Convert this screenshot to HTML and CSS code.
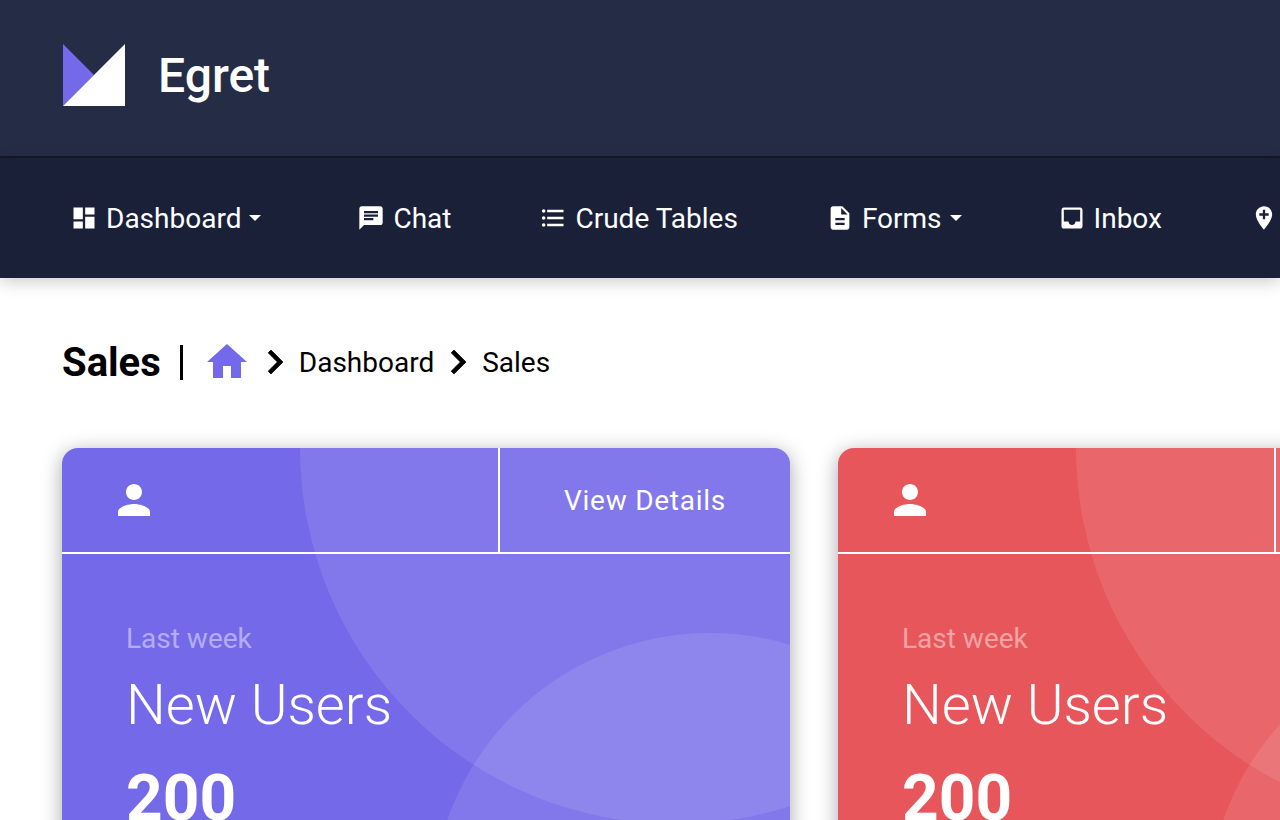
FILE: index.html
```html
<html>
<head>
<link rel="stylesheet" href="styles.css">
</head>
<body>

<div class="brand">
<svg class="logo" viewBox="0 0 62 62"><path fill="#7469e9" d="M0 0L31 31 0 62z"/><path fill="#fff" d="M62 0V62H0z"/></svg>
<span class="brand-name">Egret</span>
</div>

<div class="nav">
<a class="nav-item"><svg class="nav-icon" viewBox="0 0 24 24"><path d="M3 13h8V3H3v10zm0 8h8v-6H3v6zm10 0h8V11h-8v10zm0-18v6h8V3h-8z"/></svg>Dashboard<i class="caret"></i></a>
<a class="nav-item"><svg class="nav-icon" viewBox="0 0 24 24"><path d="M20 2H4c-1.1 0-1.99.9-1.99 2L2 22l4-4h14c1.1 0 2-.9 2-2V4c0-1.1-.9-2-2-2zM6 9h12v2H6V9zm8 5H6v-2h8v2zm4-6H6V6h12v2z"/></svg>Chat</a>
<a class="nav-item"><svg class="nav-icon" viewBox="0 0 24 24"><path d="M4 10.5c-.83 0-1.5.67-1.5 1.5s.67 1.5 1.5 1.5 1.5-.67 1.5-1.5-.67-1.5-1.5-1.5zm0-6c-.83 0-1.5.67-1.5 1.5S3.17 7.5 4 7.5 5.5 6.83 5.5 6 4.83 4.5 4 4.5zm0 12c-.83 0-1.5.68-1.5 1.5s.68 1.5 1.5 1.5 1.5-.68 1.5-1.5-.67-1.5-1.5-1.5zM7 19h14v-2H7v2zm0-6h14v-2H7v2zm0-8v2h14V5H7z"/></svg>Crude Tables</a>
<a class="nav-item"><svg class="nav-icon" viewBox="0 0 24 24"><path d="M14 2H6c-1.1 0-1.99.9-1.99 2L4 20c0 1.1.89 2 1.99 2H18c1.1 0 2-.9 2-2V8l-6-6zm2 16H8v-2h8v2zm0-4H8v-2h8v2zm-3-5V3.5L18.5 9H13z"/></svg>Forms<i class="caret"></i></a>
<a class="nav-item"><svg class="nav-icon" viewBox="0 0 24 24"><path d="M19 3H4.99c-1.11 0-1.98.89-1.98 2L3 19c0 1.1.88 2 1.99 2H19c1.1 0 2-.9 2-2V5c0-1.11-.9-2-2-2zm0 12h-4c0 1.66-1.35 3-3 3s-3-1.34-3-3H4.99V5H19v10z"/></svg>Inbox</a>
<a class="nav-item"><svg class="nav-icon" viewBox="0 0 24 24"><path d="M12 2C8.14 2 5 5.14 5 9c0 5.25 7 13 7 13s7-7.75 7-13c0-3.86-3.14-7-7-7zm4 8h-3v3h-2v-3H8V8h3V5h2v3h3v2z"/></svg></a>
</div>

<div class="content">
<div class="crumbs">
<h1 class="page-title">Sales</h1>
<svg class="home" viewBox="2 3 20 17"><path d="M10 20v-6h4v6h5v-8h3L12 3 2 12h3v8z"/></svg>
<svg class="chev" viewBox="8 6 8 12"><path d="M10 6L8.59 7.41 13.17 12l-4.58 4.59L10 18l6-6z"/></svg>
<span>Dashboard</span>
<svg class="chev" viewBox="8 6 8 12"><path d="M10 6L8.59 7.41 13.17 12l-4.58 4.59L10 18l6-6z"/></svg>
<span>Sales</span>
</div>

<div class="cards">
<div class="card card-purple">
<div class="card-head">
<div class="card-icon"><svg class="person" viewBox="0 0 24 24"><path d="M12 12c2.21 0 4-1.79 4-4s-1.79-4-4-4-4 1.79-4 4 1.79 4 4 4zm0 2c-2.67 0-8 1.34-8 4v2h16v-2c0-2.66-5.33-4-8-4z"/></svg></div>
<a class="card-link">View Details</a>
</div>
<div class="card-body">
<div class="card-label">Last week</div>
<div class="card-title">New Users</div>
<div class="card-num">200</div>
</div>
</div>

<div class="card card-red">
<div class="card-head">
<div class="card-icon"><svg class="person" viewBox="0 0 24 24"><path d="M12 12c2.21 0 4-1.79 4-4s-1.79-4-4-4-4 1.79-4 4 1.79 4 4 4zm0 2c-2.67 0-8 1.34-8 4v2h16v-2c0-2.66-5.33-4-8-4z"/></svg></div>
<a class="card-link">View Details</a>
</div>
<div class="card-body">
<div class="card-label">Last week</div>
<div class="card-title">New Users</div>
<div class="card-num">200</div>
</div>
</div>
</div>
</div>

</body>
</html>
```

FILE: styles.css
```css
html, body {
  height: 100%;
}
body {
  margin: 0;
  overflow: hidden;
  background: #fff;
  color: #000;
  font-family: Roboto, sans-serif;
}

.brand {
  display: flex;
  align-items: center;
  height: 156px;
  padding-left: 63px;
  background: #252c46;
  border-bottom: 2px solid #14182c;
}
.logo {
  width: 62px;
  height: 62px;
  margin-top: -7px;
}
.brand-name {
  margin-left: 33px;
  margin-top: -5px;
  color: #fff;
  font-size: 48px;
  font-weight: 500;
}

.nav {
  position: relative;
  display: flex;
  align-items: center;
  height: 120px;
  padding-left: 26px;
  background: #1a2038;
  box-shadow: 0 4px 16px rgba(0, 0, 0, .2);
  white-space: nowrap;
}
.nav-item {
  display: flex;
  align-items: center;
  flex: none;
  padding: 0 44px;
  color: #fff;
  font-size: 28px;
}
.nav-icon {
  width: 28px;
  height: 28px;
  margin-right: 8px;
  fill: #fff;
}
.caret {
  margin: 0 8px;
  border-top: 6px solid #fff;
  border-left: 6px solid transparent;
  border-right: 6px solid transparent;
}

.content {
  padding: 64px 0 0 62px;
}
.crumbs {
  display: flex;
  align-items: center;
  height: 40px;
  font-size: 28px;
}
.page-title {
  margin: 0 24px 0 0;
  padding: 1px 19px 0 0;
  border-right: 3px solid #000;
  font-size: 40px;
  font-weight: 700;
  line-height: 34px;
}
.home {
  width: 40px;
  height: 34px;
  margin: -2px 20px 0 0;
  fill: #7469e9;
}
.chev {
  width: 16px;
  height: 24px;
  margin-right: 16px;
  overflow: visible;
  stroke: #000;
  stroke-width: .35;
}
.crumbs span + .chev {
  margin-left: 16px;
}

.cards {
  display: flex;
  gap: 48px;
  margin-top: 66px;
}
.card {
  position: relative;
  flex: none;
  width: 728px;
  height: 600px;
  border-radius: 16px;
  overflow: hidden;
  color: #fff;
  box-shadow: 0 4px 20px rgba(0, 0, 0, .35);
}
.card-purple {
  background: #7469e9;
}
.card-red {
  background: #e7565a;
}
.card::before,
.card::after {
  content: "";
  position: absolute;
  border-radius: 50%;
  background: rgba(255, 255, 255, .1);
}
.card::before {
  left: 238px;
  top: -376px;
  width: 752px;
  height: 752px;
}
.card::after {
  left: 370px;
  top: 185px;
  width: 556px;
  height: 556px;
}
.card-head {
  position: relative;
  z-index: 1;
  display: flex;
  height: 104px;
  border-bottom: 2px solid #fff;
}
.card-icon {
  display: flex;
  align-items: center;
  width: 438px;
  padding-left: 48px;
  box-sizing: border-box;
  border-right: 2px solid #fff;
}
.person {
  width: 48px;
  height: 48px;
  fill: #fff;
}
.card-link {
  flex: 1;
  text-align: center;
  font-size: 28px;
  line-height: 106px;
  letter-spacing: .75px;
}
.card-body {
  position: relative;
  z-index: 1;
  padding: 67px 64px 0;
}
.card-label {
  font-size: 28px;
  line-height: 36px;
  opacity: .45;
}
.card-title {
  margin-top: 15px;
  font-size: 56px;
  font-weight: 300;
  line-height: 66px;
}
.card-num {
  margin-top: 23px;
  font-size: 64px;
  font-weight: 700;
  line-height: 76px;
}
```
